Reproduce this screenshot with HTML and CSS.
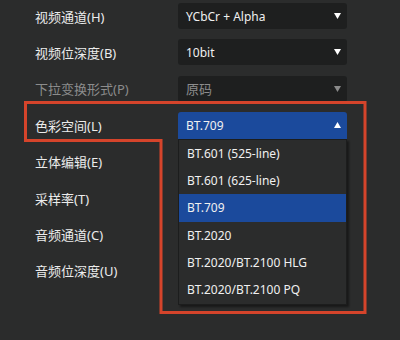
FILE: index.html
```html
<!DOCTYPE html>
<html lang="zh-CN">
<head>
    <meta charset="UTF-8">
    <title>导出设置</title>
    <link rel="stylesheet" href="styles.css">
</head>
<body>
    <div class="panel">
        <div class="form">
            <div class="label">视频通道<span class="key">(H)</span></div>
            <div class="select">
                <span>YCbCr + Alpha</span>
                <svg class="arrow" width="7" height="6" viewBox="0 0 7 6"><polygon points="0,0 7,0 3.5,6" /></svg>
            </div>

            <div class="label">视频位深度<span class="key">(B)</span></div>
            <div class="select">
                <span>10bit</span>
                <svg class="arrow" width="7" height="6" viewBox="0 0 7 6"><polygon points="0,0 7,0 3.5,6" /></svg>
            </div>

            <div class="label disabled">下拉变换形式<span class="key">(P)</span></div>
            <div class="select disabled">
                <span>原码</span>
                <svg class="arrow" width="7" height="6" viewBox="0 0 7 6"><polygon points="0,0 7,0 3.5,6" /></svg>
            </div>

            <div class="label">色彩空间<span class="key">(L)</span></div>
            <div class="select-wrap">
                <div class="select open">
                    <span>BT.709</span>
                    <svg class="arrow" width="7" height="6" viewBox="0 0 7 6"><polygon points="0,6 7,6 3.5,0" /></svg>
                </div>
                <ul class="options">
                    <li>BT.601 (525-line)</li>
                    <li>BT.601 (625-line)</li>
                    <li class="selected">BT.709</li>
                    <li>BT.2020</li>
                    <li>BT.2020/BT.2100 HLG</li>
                    <li>BT.2020/BT.2100 PQ</li>
                </ul>
            </div>

            <div class="label">立体编辑<span class="key">(E)</span></div>
            <div></div>

            <div class="label">采样率<span class="key">(T)</span></div>
            <div></div>

            <div class="label">音频通道<span class="key">(C)</span></div>
            <div></div>

            <div class="label">音频位深度<span class="key">(U)</span></div>
            <div></div>
        </div>

        <!-- highlight annotation -->
        <svg class="callout" width="400" height="340" viewBox="0 0 400 340">
            <polygon points="25.5,104.5 365,104.5 365,314.5 161,314.5 161,142.5 25.5,142.5" />
        </svg>
    </div>
</body>
</html>
```

FILE: styles.css
```css
* {
    margin: 0;
    padding: 0;
    box-sizing: border-box;
}

body {
    background: #2b2c2c;
    font-family: 'Noto Sans', 'Noto Sans CJK SC', sans-serif;
    overflow: hidden;
}

.panel {
    position: relative;
    width: 400px;
    height: 340px;
}

.form {
    display: grid;
    grid-template-columns: 143px 169px;
    grid-auto-rows: 36.43px;
    align-items: center;
    margin-top: -2.2px;
    padding-left: 35px;
}

.label {
    font-family: 'Noto Sans CJK SC', sans-serif;
    font-size: 13px;
    color: #ececec;
    white-space: nowrap;
}

.label .key {
    font-family: 'Noto Sans', sans-serif;
}

.label.disabled {
    color: #8c8c8c;
}

.select {
    display: flex;
    align-items: center;
    justify-content: space-between;
    height: 26px;
    padding: 0 6px 0 8px;
    background: #1e1f1f;
    border-radius: 3px;
    font-size: 12px;
    color: #f0f0f0;
}

.select.disabled {
    color: #8c8c8c;
    font-family: 'Noto Sans CJK SC', sans-serif;
    font-size: 13px;
}

.arrow {
    fill: #ffffff;
}

.select.disabled .arrow {
    fill: #8a8a8a;
}

.select-wrap {
    position: relative;
}

.select.open {
    height: 27px;
    background: #1b4a9c;
    border-radius: 3px 3px 0 0;
}

.options {
    position: absolute;
    top: 100%;
    left: 0;
    width: 169px;
    list-style: none;
    background: #2b2c2c;
    border: 1px solid #1c1d1d;
    box-shadow: 2px 2px 2px rgba(0, 0, 0, 0.45);
    z-index: 2;
}

.options li {
    height: 27.3px;
    line-height: 27.3px;
    padding-left: 8px;
    font-size: 12px;
    color: #f0f0f0;
}

.options li.selected {
    background: #1b4a9c;
}

.callout {
    position: absolute;
    top: 0;
    left: 0;
    pointer-events: none;
    z-index: 3;
}

.callout polygon {
    fill: none;
    stroke: #d5442b;
    stroke-width: 3;
}
```
